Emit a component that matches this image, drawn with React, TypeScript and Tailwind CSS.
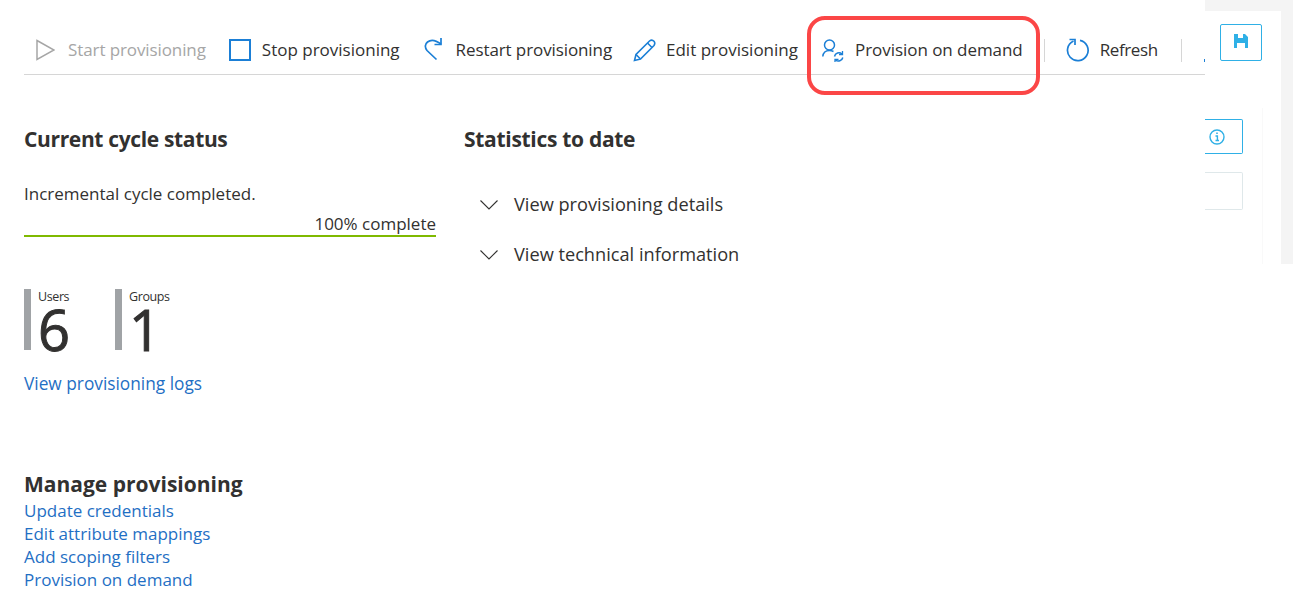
import { ReactNode } from 'react';

function ToolButton({ icon, label, muted, className, labelClass = '' }: { icon: ReactNode; label: string; muted?: boolean; className: string; labelClass?: string }) {
  return (
    <div className={`flex items-center shrink-0 ${className}`}>
      {icon}
      <span className={`${muted ? 'text-[#a6a6a6]' : 'text-[#323130]'} ${labelClass}`}>{label}</span>
    </div>
  );
}

function Stat({ label, value, className }: { label: string; value: string; className: string }) {
  return (
    <div className={`flex h-[61px] ${className}`}>
      <div className="w-[7px] h-full bg-[#a0a3a6]" />
      <div className="ml-[7px]">
        <div className="h-[14px] text-[12.5px] leading-[14px] tracking-[-0.4px] mt-[1px] text-[#323130]">{label}</div>
        <div className="text-[56px] leading-[50px] text-[#323130] [-webkit-text-stroke:1px_#323130]">{value}</div>
      </div>
    </div>
  );
}

function Expander({ label, className }: { label: string; className: string }) {
  return (
    <div className={`flex items-center h-[24px] text-[18.2px] ${className}`}>
      <svg width="18" height="10" viewBox="0 0 18 10" fill="none" stroke="#323130" strokeWidth="1.1" className="ml-[16px] mr-[16px]">
        <path d="M0.5 0.5 L9 9 L17.5 0.5" />
      </svg>
      <span>{label}</span>
    </div>
  );
}

export default function App() {
  return (
    <div className="relative flex w-[1293px] h-[593px] overflow-hidden bg-white text-[#323130] text-[17px] font-['Open_Sans','Noto_Sans',sans-serif]">
      <main className="w-[1205px] shrink-0">
        {/* Command bar */}
        <div className="flex items-center h-[75px] ml-[24px] pt-[27px] pb-[1px] border-b border-[#d6d6d6] overflow-hidden whitespace-nowrap">
          <ToolButton
            className="ml-[12px]"
            muted
            labelClass="tracking-[-0.1px]"
            label="Start provisioning"
            icon={
              <svg width="19" height="22" viewBox="0 0 19 22" className="mr-[13px]" fill="none" stroke="#a6a6a6" strokeWidth="1.5">
                <path d="M1 1.5 L18 11 L1 20.5 Z" />
              </svg>
            }
          />
          <ToolButton
            className="ml-[23px]"
            label="Stop provisioning"
            icon={<div className="w-[22px] h-[22px] border-2 border-[#1b7fd6] mr-[11px]" />}
          />
          <ToolButton
            className="ml-[24px]"
            labelClass="tracking-[-0.1px]"
            label="Restart provisioning"
            icon={
              <svg width="19" height="24" viewBox="0 0 19 24" className="mr-[13px]" fill="none" stroke="#1b7fd6" strokeWidth="1.7">
                <path d="M12.5 21.5 L3 12.5 C0.5 9.5 1 6 3.5 4 C6.5 1.5 11 1.5 17 6" />
                <path d="M17 0 V6.5 H10.5" />
              </svg>
            }
          />
          <ToolButton
            className="ml-[21px]"
            label="Edit provisioning"
            icon={
              <svg width="23" height="23" viewBox="0 0 23 23" className="mr-[10px]" fill="none" stroke="#1b7fd6" strokeWidth="1.6">
                <path d="M1.5 21.5 L3 15.5 L16.5 2 C18 0.8 20 1.2 21 2.3 C22 3.5 22 5 21 6.5 L7.5 20 Z" />
                <path d="M14.5 4 L19 8.5 M3 15.5 L7.5 20" />
              </svg>
            }
          />
          <ToolButton
            className="ml-[24px]"
            labelClass="tracking-[-0.05px]"
            label="Provision on demand"
            icon={
              <svg width="23" height="23" viewBox="0 0 23 23" className="mr-[10px]" fill="none" stroke="#1b7fd6" strokeWidth="1.5">
                <circle cx="7.5" cy="6" r="5" />
                <path d="M0.8 17.5 C1.2 13.5 4 11.5 7.5 11.5 C9 11.5 10.5 12 11.5 12.5" />
                <path d="M12.5 17.5 A4.5 4.5 0 0 1 20 15 M20.8 18.5 A4.5 4.5 0 0 1 13.5 21" />
                <path d="M20.5 12 V15.5 H17 M13 23.5 V20.5 H16.5" strokeWidth="1.3" />
              </svg>
            }
          />
          <div className="w-[1px] h-[23px] ml-[21px] bg-[#d6d6d6] shrink-0" />
          <ToolButton
            className="ml-[21px]"
            labelClass="tracking-[-0.4px]"
            label="Refresh"
            icon={
              <svg width="24" height="24" viewBox="0 0 24 24" className="mr-[10px]" fill="none" stroke="#1b7fd6" strokeWidth="1.7">
                <path d="M7.5 3 A10.3 10.3 0 1 0 14 2.3" />
                <path d="M3.5 1.5 H9 V7" />
              </svg>
            }
          />
          <div className="w-[1px] h-[23px] ml-[23px] bg-[#d6d6d6] shrink-0" />
          <div className="w-[2px] h-[3px] ml-[22px] mt-[20px] bg-[#1b7fd6] shrink-0" />
        </div>

        <div className="flex ml-[24px] mt-[50px]">
          {/* Current cycle */}
          <section className="w-[412px]">
            <h2 className="text-[21px] leading-[28px] font-bold tracking-[-0.35px]">Current cycle status</h2>
            <p className="mt-[29px] leading-[24px]">Incremental cycle completed.</p>
            <div className="mt-[6px] h-[23px] text-right leading-[24px] border-b-2 border-[#7fb900] box-content">100% complete</div>
            <div className="flex mt-[52px]">
              <Stat label="Users" value="6" className="w-[91px]" />
              <Stat label="Groups" value="1" className="w-[91px]" />
            </div>
            <a className="block mt-[22px] leading-[24px] text-[17.3px] text-[#1f6fc4]">View provisioning logs</a>
          </section>

          {/* Statistics */}
          <section className="ml-[28px]">
            <h2 className="text-[21px] leading-[28px] font-bold tracking-[-0.3px]">Statistics to date</h2>
            <Expander label="View provisioning details" className="mt-[40px]" />
            <Expander label="View technical information" className="mt-[26px]" />
          </section>
        </div>

        <section className="ml-[24px] mt-[74px]">
          <h2 className="text-[21px] leading-[28px] font-bold">Manage provisioning</h2>
          <nav className="flex flex-col mt-[1px] text-[#1f6fc4] leading-[23px]">
            <a>Update credentials</a>
            <a>Edit attribute mappings</a>
            <a>Add scoping filters</a>
            <a>Provision on demand</a>
          </nav>
        </section>
      </main>

      {/* Right edge of the page behind the blade */}
      <aside className="flex-1 h-[264px] bg-[#f4f4f4] pt-[11px] pr-[12px]">
        <div className="h-full bg-white">
          <div className="w-[42px] h-[37px] ml-[15px] mt-[13px] absolute top-[11px] flex items-center justify-center border border-[#2fb0e6] rounded-[2px]">
            <svg width="14" height="14" viewBox="0 0 14 14" className="-mt-[3px]">
              <path d="M0 0 H11 L14 3 V14 H11 V9 H3 V14 H0 Z M4 0 V4 H9 V0 Z" fill="#2fb0e6" fillRule="evenodd" />
            </svg>
          </div>
          <div className="absolute top-[108px] left-[1262px] w-[1px] h-[156px] bg-[#f9f9f9]" />
          <div className="absolute top-[119px] left-[1205px] w-[38px] h-[35px] flex items-center justify-end pr-[17px] border border-l-0 border-[#2fb0e6] rounded-r-[2px]">
            <svg width="16" height="16" viewBox="0 0 16 16" fill="none" stroke="#2fb0e6">
              <circle cx="8" cy="8" r="7" strokeWidth="1.4" />
              <path d="M6.5 7 H8.4 V11.5 M6.5 11.5 H10" strokeWidth="1.4" />
              <path d="M7.2 4.2 H8.8" strokeWidth="1.6" />
            </svg>
          </div>
          <div className="absolute top-[172px] left-[1205px] w-[38px] h-[38px] border border-l-0 border-[#dfe8ea] rounded-r-[2px]" />
        </div>
      </aside>

      {/* Red annotation */}
      <div className="absolute left-[807px] top-[16px] w-[233px] h-[79px] border-[4px] border-[#fb4646] rounded-[18px]" />
    </div>
  );
}
